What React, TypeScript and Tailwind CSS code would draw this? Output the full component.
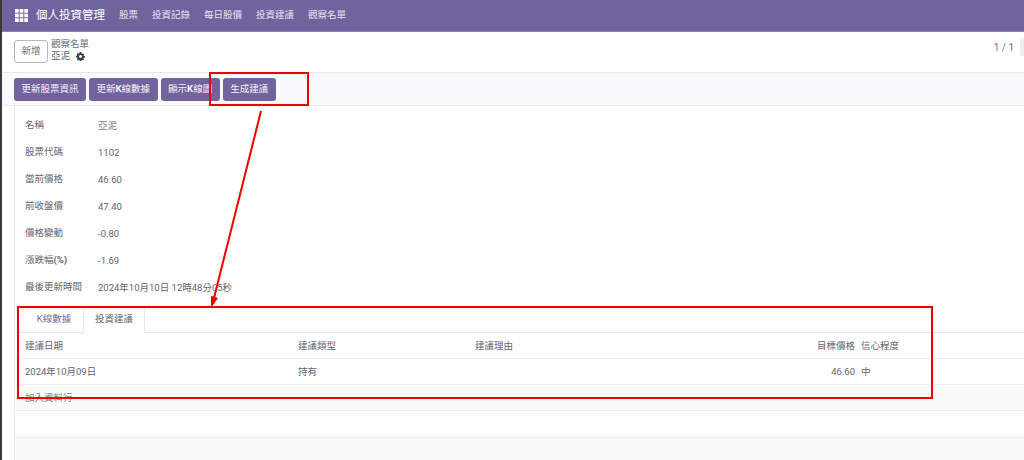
import type { ReactNode } from 'react';

const FONT = "font-['Roboto','Noto_Sans_CJK_TC',sans-serif]";

const menus = ['股票', '投資記錄', '每日股價', '投資建議', '觀察名單'];
const actions: ReactNode[] = [
  '更新股票資訊',
  <>更新<b>K</b>線數據</>,
  <>顯示<b>K</b>線圖</>,
  '生成建議',
];
const fields: { label: ReactNode; value: string }[] = [
  { label: '股票代碼', value: '1102' },
  { label: '當前價格', value: '46.60' },
  { label: '前收盤價', value: '47.40' },
  { label: '價格變動', value: '-0.80' },
  { label: <>漲跌幅<b>(%)</b></>, value: '-1.69' },
  { label: '最後更新時間', value: '2024年10月10日 12時48分05秒' },
];

function AppsIcon() {
  const cells = [0, 5, 10];
  return (
    <svg viewBox="0 0 14 14" className="ml-[13px] w-[13px] h-[13px] fill-white">
      {cells.map((y) => cells.map((x) => <rect key={`${x}-${y}`} x={x} y={y} width="4" height="4" />))}
    </svg>
  );
}

function Annotations() {
  return (
    <>
      <div className="absolute left-[209px] top-[72px] w-[100px] h-[34px] border-2 border-[#f00000]" />
      <div className="absolute left-[17px] top-[306px] w-[916px] h-[93px] border-2 border-[#f00000]" />
      <svg className="absolute left-0 top-0 pointer-events-none" width="1024" height="460">
        <line x1="261" y1="111" x2="214" y2="298" stroke="#ee0000" strokeWidth="2" />
        <polygon points="211,308 211,296 218,298" fill="#ee0000" />
      </svg>
    </>
  );
}

export default function App() {
  return (
    <div className={`${FONT} relative w-[1024px] h-[460px] overflow-hidden flex bg-white text-[9.5px] text-[#5f6670]`}>
      <div className="w-[2px] bg-[#3a3a3a] shrink-0" />
      <div className="flex-1 flex flex-col min-w-0">
        <header className="h-[32px] shrink-0 bg-[#71639e] border-b border-[#8d81b3] flex items-center text-white">
          <AppsIcon />
          <span className="ml-[8px] text-[11.5px]">個人投資管理</span>
          <nav className="ml-[14px] flex gap-[14px] text-[#e5e1ef]">
            {menus.map((m) => (
              <span key={m}>{m}</span>
            ))}
          </nav>
        </header>

        <div className="h-[41px] shrink-0 bg-white border-b border-[#e5e7eb] flex items-center pl-[12px]">
          <button className="w-[34px] h-[23px] border border-[#b5b9bf] rounded-[3px] text-[#6b7280] -mt-[1px]">新增</button>
          <div className="ml-[3px] flex flex-col leading-[12px] -mt-[4px]">
            <span className="text-[#6b7280]">觀察名單</span>
            <span className="flex items-center gap-[6px] text-[#5f6670]">
              亞泥
              <svg viewBox="0 0 16 16" className="w-[9px] h-[9px] fill-[#374151]">
                <path d="M9.4 1l.3 1.8 1.2.5 1.5-1 2 2-1 1.5.5 1.2 1.8.3v2.8l-1.8.3-.5 1.2 1 1.5-2 2-1.5-1-1.2.5-.3 1.8H6.6l-.3-1.8-1.2-.5-1.5 1-2-2 1-1.5-.5-1.2L0 9.4V6.6l1.8-.3.5-1.2-1-1.5 2-2 1.5 1 1.2-.5L6.6 0h2.8zM8 5.5a2.5 2.5 0 100 5 2.5 2.5 0 000-5z" />
              </svg>
            </span>
          </div>
          <div className="ml-auto flex items-center gap-[6px] -mt-[9px]">
            <span className="text-[#6b7280] text-[10px]">1 / 1</span>
            <span className="w-[4px] h-[17px] bg-[#eceef0] rounded-l-[2px]" />
          </div>
        </div>

        <div className="h-[33px] shrink-0 bg-[#f9fafb] border-b border-[#eceef0] flex items-center pl-[12px] gap-[3px]">
          {actions.map((a, i) => (
            <button key={i} className="h-[23px] px-[7.5px] bg-[#71639e] text-[#f3f1f7] rounded-[3px]">{a}</button>
          ))}
        </div>

        <main className="flex-1 min-h-0 ml-[12px] border-l border-[#e5e7eb] flex flex-col bg-white">
          <div className="pl-[10px] pt-[6px] h-[200px] shrink-0">
            <div className="h-[27px] flex items-center">
              <span className="w-[73px]">名稱</span>
              <span className="text-[#7b828c] mt-[1px]">亞泥</span>
            </div>
            {fields.map((f, i) => (
              <div key={i} className="h-[27px] flex items-center">
                <span className="w-[73px] whitespace-nowrap">{f.label}</span>
                <span className="mt-[2px] whitespace-nowrap">{f.value}</span>
              </div>
            ))}
          </div>

          <div className="h-[27px] shrink-0 border-b border-[#e5e7eb] flex items-end pl-[4px]">
            <span className="h-[26px] w-[64px] pl-[6px] flex items-center justify-center text-[#7a7099]">K線數據</span>
            <span className="h-[27px] w-[62px] -mb-[1px] bg-white border-x border-[#e5e7eb] flex items-center justify-center">投資建議</span>
          </div>

          <div className="h-[26px] shrink-0 border-b border-[#eceef0] flex items-center pl-[10px] pr-[113px] pt-[1px]">
            <span className="w-[273px]">建議日期</span>
            <span className="w-[177px]">建議類型</span>
            <span className="flex-1">建議理由</span>
            <span className="w-[60px] text-right">目標價格</span>
            <span className="ml-[6px] w-[50px]">信心程度</span>
          </div>
          <div className="h-[26px] shrink-0 border-b border-[#eceef0] flex items-center pl-[10px] pr-[113px] pt-[1px]">
            <span className="w-[273px]">2024年10月09日</span>
            <span className="w-[177px]">持有</span>
            <span className="flex-1" />
            <span className="w-[60px] text-right">46.60</span>
            <span className="ml-[6px] w-[50px]">中</span>
          </div>
          <div className="h-[26px] shrink-0 border-b border-[#eceef0] bg-[#fafafa] flex items-center pl-[10px] pt-[1px] text-[#7b828c]">加入資料行</div>
          <div className="h-[27px] shrink-0 border-b border-[#eceef0] bg-white" />
          <div className="flex-1 bg-[#f9f9f9]" />
        </main>
      </div>
      <Annotations />
    </div>
  );
}
